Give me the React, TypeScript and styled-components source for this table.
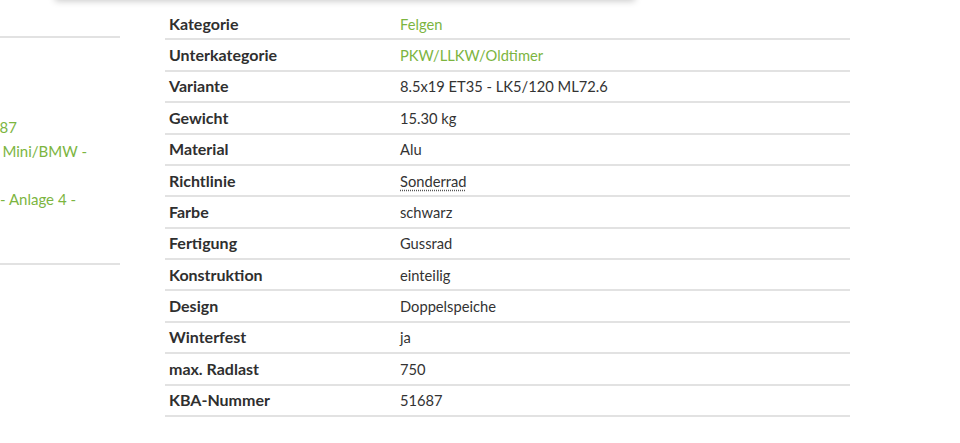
import React from "react";
import styled, { createGlobalStyle } from "styled-components";

const GlobalStyle = createGlobalStyle`
  html, body { margin: 0; padding: 0; background: #ffffff; }
  body {
    font-family: Lato, "Open Sans", "Liberation Sans", sans-serif;
    color: #333333;
    overflow: hidden;
  }
`;

const Page = styled.div`
  position: relative;
  width: 960px;
  height: 443px;
  overflow: hidden;
`;

const TopShadow = styled.div`
  position: absolute;
  top: -20px;
  left: 55px;
  width: 580px;
  height: 20px;
  background: #ffffff;
  box-shadow: 0 1px 7px rgba(0, 0, 0, 0.22);
`;

const Main = styled.div`
  display: flex;
  align-items: flex-start;
  gap: 45px;
  padding-top: 9px;
`;

const Sidebar = styled.aside`
  width: 120px;
  flex: none;
  display: flex;
  flex-direction: column;
  padding-top: 27px;
`;

const Rule = styled.div<{ $after: number }>`
  height: 2px;
  background: #e2e2e2;
  margin-bottom: ${(p) => p.$after}px;
`;

const SideText = styled.div`
  display: flex;
  flex-direction: column;
  font-size: 15px;
  line-height: 24px;
  color: #7cb53f;
  margin-bottom: 52px;
`;

const SideLine = styled.div<{ $end: number }>`
  display: flex;
  justify-content: flex-end;
  width: ${(p) => p.$end}px;
  height: 24px;
  overflow: hidden;
  white-space: pre;
`;

const Table = styled.div`
  width: 685px;
  display: flex;
  flex-direction: column;
`;

const Row = styled.div`
  display: grid;
  grid-template-columns: 231px 1fr;
  align-items: center;
  height: 31.375px;
  box-sizing: border-box;
  border-bottom: 2px solid #e2e2e2;
  padding: 0 0 0 4px;
  line-height: 20px;
`;

const Label = styled.div`
  font-size: 16px;
  font-weight: 700;
  color: #2f2f2f;
`;

const Value = styled.div<{ $link?: boolean }>`
  font-size: 14.7px;
  color: ${(p) => (p.$link ? "#7cb53f" : "#333333")};
`;

const Abbr = styled.abbr`
  text-decoration: underline dotted #555;
  text-underline-offset: 3px;
  cursor: help;
`;

type Item = { label: string; value: React.ReactNode; link?: boolean };

const items: Item[] = [
  { label: "Kategorie", value: "Felgen", link: true },
  { label: "Unterkategorie", value: "PKW/LLKW/Oldtimer", link: true },
  { label: "Variante", value: "8.5x19 ET35 - LK5/120 ML72.6" },
  { label: "Gewicht", value: "15.30 kg" },
  { label: "Material", value: "Alu" },
  { label: "Richtlinie", value: <Abbr title="Sonderrad">Sonderrad</Abbr> },
  { label: "Farbe", value: "schwarz" },
  { label: "Fertigung", value: "Gussrad" },
  { label: "Konstruktion", value: "einteilig" },
  { label: "Design", value: "Doppelspeiche" },
  { label: "Winterfest", value: "ja" },
  { label: "max. Radlast", value: "750" },
  { label: "KBA-Nummer", value: "51687" },
];

export default function App() {
  return (
    <Page>
      <GlobalStyle />
      <TopShadow />
      <Main>
        <Sidebar>
          <Rule $after={77} />
          <SideText>
            <SideLine $end={17}>KBA 51687</SideLine>
            <SideLine $end={87}>Audi VW Mini/BMW -</SideLine>
            <SideLine $end={0}> </SideLine>
            <SideLine $end={76}>ABE - Anlage 4 -</SideLine>
          </SideText>
          <Rule $after={0} />
        </Sidebar>
        <Table>
          {items.map((it) => (
            <Row key={it.label}>
              <Label>{it.label}</Label>
              <Value $link={it.link}>{it.value}</Value>
            </Row>
          ))}
        </Table>
      </Main>
    </Page>
  );
}
